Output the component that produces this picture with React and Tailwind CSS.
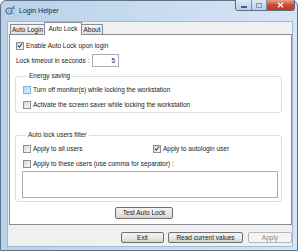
import React from "react";

function Box({ checked = false, hover = false }) {
  return (
    <span
      className={
        hover
          ? "w-[8px] h-[8px] shrink-0 border border-[#7eb4dc] bg-gradient-to-br from-[#b3dbf3] to-[#d9effb] flex items-center justify-center"
          : "w-[8px] h-[8px] shrink-0 border border-[#8f8f8f] bg-gradient-to-br from-[#d6d6d6] to-[#fafafa] flex items-center justify-center"
      }
    >
      {checked && (
        <svg width="7" height="7" viewBox="0 0 7 7">
          <path d="M1 3.6 L2.8 5.4 L6 1.2" fill="none" stroke="#2b4a8c" strokeWidth="1.3" />
        </svg>
      )}
    </span>
  );
}

function Check({ checked, hover, children, className = "" }) {
  return (
    <div className={"flex items-center h-[9px] " + className}>
      <Box checked={checked} hover={hover} />
      <span className="ml-[2px] whitespace-nowrap">{children}</span>
    </div>
  );
}

function Btn({ children, className = "", disabled = false }) {
  return (
    <div
      className={
        disabled
          ? "h-[11px] flex items-center justify-center rounded-[2px] border border-[#b5b8bb] bg-[#f4f4f4] text-[#8a8a8a] " + className
          : "h-[11px] flex items-center justify-center rounded-[2px] border border-[#707070] bg-gradient-to-b from-[#f3f3f3] via-[#e9e9e9] to-[#d3d3d3] " + className
      }
    >
      {children}
    </div>
  );
}

export default function App() {
  return (
    <div className="w-[300px] h-[251px] bg-white font-['Liberation_Sans',Arial,sans-serif] text-[6.5px] leading-[8px] text-[#1b1b1b]">
      <div className="w-[298px] h-[251px] rounded-t-[6px] border border-[#5e728c] bg-gradient-to-r from-[#bad1ea] to-[#d6e5f4] flex flex-col pl-[6px] pr-[4px] pb-[3px]">
        {/* title bar */}
        <div className="h-[20px] flex items-start shrink-0">
          <svg className="mt-[4px] ml-[-2px]" width="11" height="11" viewBox="0 0 11 11">
            <circle cx="4" cy="6" r="3" fill="none" stroke="#4c6f96" strokeWidth="1.2" />
            <circle cx="4" cy="6" r="1" fill="#7aa2c9" />
            <path d="M6.3 4 L9.5 1 M8 2.5 L9.5 4" stroke="#5b7ea3" strokeWidth="1.1" fill="none" />
            <circle cx="8.5" cy="8.5" r="1.2" fill="#9bb9d8" />
          </svg>
          <span className="ml-[3px] mt-[5px] text-[7px] leading-[9px] text-[#1c2a3a]">Login Helper</span>
          <div className="ml-auto mr-[-2px] mt-[-1px] flex h-[11px] rounded-b-[3px] border border-t-0 border-[#5a6f8a] overflow-hidden">
            <div className="w-[16px] h-full bg-gradient-to-b from-[#dfe9f5] to-[#b9cde4] border-r border-[#7a8ea8] flex items-center justify-center">
              <div className="w-[6px] h-[2px] mt-[3px] bg-white border border-[#4d5f77]" />
            </div>
            <div className="w-[15px] h-full bg-gradient-to-b from-[#dfe9f5] to-[#b9cde4] border-r border-[#7a8ea8] flex items-center justify-center">
              <div className="w-[6px] h-[5px] border border-[#8b99ab] bg-transparent" />
            </div>
            <div className="w-[27px] h-full bg-gradient-to-b from-[#e9a191] via-[#d2472f] to-[#c4361f] flex items-center justify-center">
              <svg width="7" height="6" viewBox="0 0 7 6">
                <path d="M1 0.8 L6 5.2 M6 0.8 L1 5.2" stroke="#ffffff" strokeWidth="1.5" />
              </svg>
            </div>
          </div>
        </div>

        {/* client area */}
        <div className="flex-1 bg-[#f0f0f0] border border-[#a4b8cf] flex flex-col">
          {/* tabs */}
          <div className="h-[12px] flex items-end pl-[2px] shrink-0 relative z-10">
            <div className="h-[10px] w-[35px] border border-b-0 border-[#898c95] bg-gradient-to-b from-[#f3f3f3] to-[#e2e2e2] flex items-center justify-center mb-[0px]">
              Auto Login
            </div>
            <div className="h-[13px] w-[38px] -mb-[1px] border border-b-0 border-[#898c95] bg-white flex items-center justify-center -ml-[1px]">
              Auto Lock
            </div>
            <div className="h-[10px] w-[21px] border border-b-0 border-l-0 border-[#898c95] bg-gradient-to-b from-[#f3f3f3] to-[#e2e2e2] flex items-center justify-center">
              About
            </div>
          </div>

          {/* panel */}
          <div className="ml-[1px] mr-[0px] h-[191px] border border-[#898c95] bg-white flex flex-col shrink-0">
            <Check checked className="mt-[6px] ml-[6px]">Enable Auto Lock upon login</Check>
            <div className="mt-[4px] ml-[6px] h-[13px] flex items-center">
              <span className="w-[76px] whitespace-nowrap">Lock timeout in seconds :</span>
              <div className="w-[27px] h-[13px] border border-[#abadb3] bg-white flex items-center justify-end pr-[3px]">5</div>
            </div>

            <fieldset className="mt-[5px] ml-[5px] w-[267px] border border-[#d5dfe5] rounded-[3px] pl-[7px] pb-[3px]">
              <legend className="ml-[4px] px-[2px] leading-[8px]">Energy saving</legend>
              <Check hover className="mt-[5px]">Turn off monitor(s) while locking the workstation</Check>
              <Check className="mt-[6px]">Activate the screen saver while locking the workstation</Check>
            </fieldset>

            <fieldset className="mt-[18px] ml-[5px] w-[267px] border border-[#d5dfe5] rounded-[3px] pl-[6px] pb-[3px]">
              <legend className="ml-[4px] px-[2px] leading-[8px]">Auto lock users filter</legend>
              <div className="mt-[5px] flex items-center">
                <Check className="w-[130px] ml-[1px]">Apply to all users</Check>
                <Check checked>Apply to autologin user</Check>
              </div>
              <Check className="mt-[6px] ml-[1px]">Apply to these users (use comma for separator) :</Check>
              <div className="mt-[3px] w-[256px] h-[27px] border border-[#abadb3] bg-white" />
            </fieldset>

            <Btn className="mt-[5px] ml-[105px] w-[58px] h-[12px]">Test Auto Lock</Btn>
          </div>

          {/* bottom buttons */}
          <div className="mt-[7px] flex justify-end pr-[0px]">
            <Btn className="w-[43px]">Exit</Btn>
            <Btn className="w-[75px] ml-[4px]">Read current values</Btn>
            <Btn disabled className="w-[44px] ml-[5px]">Apply</Btn>
          </div>
        </div>
      </div>
    </div>
  );
}
